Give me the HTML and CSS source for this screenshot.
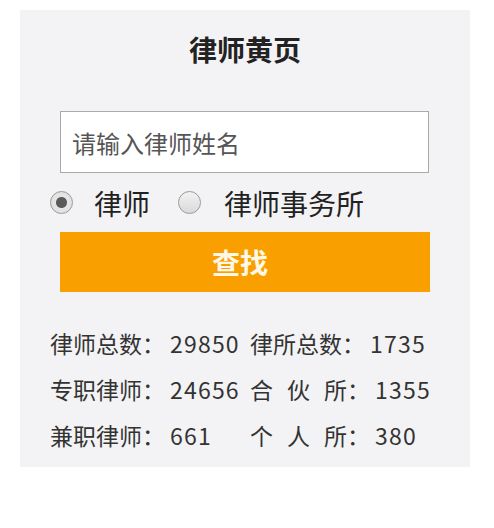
FILE: index.html
```html
<!DOCTYPE html>
<html lang="zh-CN">
<head>
<meta charset="utf-8">
<title>律师黄页</title>
<link rel="stylesheet" href="styles.css">
</head>
<body>
<div class="panel">
  <h1 class="title">律师黄页</h1>
  <input class="search" type="text" placeholder="请输入律师姓名">
  <div class="radios">
    <label class="opt"><input class="radio" type="radio" name="t" checked><span class="opt-text">律师</span></label>
    <label class="opt opt-2"><input class="radio" type="radio" name="t"><span class="opt-text">律师事务所</span></label>
  </div>
  <button class="btn" type="button">查找</button>
  <div class="stats">
    <div class="cell">律师总数：<span class="num">29850</span></div>
    <div class="cell">律所总数：<span class="num">1735</span></div>
    <div class="cell">专职律师：<span class="num">24656</span></div>
    <div class="cell"><span class="sp">合伙</span>所：<span class="num">1355</span></div>
    <div class="cell">兼职律师：<span class="num">661</span></div>
    <div class="cell"><span class="sp">个人</span>所：<span class="num">380</span></div>
  </div>
</div>
</body>
</html>
```

FILE: styles.css
```css
* { box-sizing: border-box; }
html, body { margin: 0; padding: 0; background: #ffffff; }
body {
  font-family: "Noto Sans CJK SC", "Noto Sans", sans-serif;
  color: #333;
}
.panel {
  margin: 10px 0 0 20px;
  width: 450px;
  height: 457px;
  background: #f3f3f5;
  padding: 19px 0 0 0;
  display: flex;
  flex-direction: column;
}
.title {
  margin: 0;
  font-size: 28px;
  line-height: 40px;
  font-weight: 700;
  text-align: center;
  color: #222;
}
.search {
  margin: 42px 0 0 40px;
  width: 369px;
  height: 62px;
  border: 1px solid #aaa;
  background: #fff;
  padding: 0 11px;
  font-family: inherit;
  font-size: 24px;
  color: #333;
  outline: none;
}
.search::placeholder { color: #555; }
.radios {
  height: 59px;
  display: flex;
  align-items: center;
  padding-left: 30px;
}
.opt {
  display: flex;
  align-items: center;
}
.opt-2 { margin-left: 28px; }
.radio {
  appearance: none;
  -webkit-appearance: none;
  margin: 0;
  width: 23px;
  height: 23px;
  border-radius: 50%;
  border: 1px solid #9a9a9a;
  background: linear-gradient(#f2f2f2, #d9d9d9);
}
.radio:checked {
  background: radial-gradient(circle, #5a5a5a 0 5px, #e6e6e6 6px, #dcdcdc 100%);
}
.opt-text {
  margin-left: 21px;
  font-size: 28px;
  color: #222;
}
.opt-2 .opt-text { margin-left: 23px; }
.btn {
  margin: 0 0 0 40px;
  width: 370px;
  height: 60px;
  border: none;
  background: #f9a000;
  color: #fff8e8;
  font-family: inherit;
  font-size: 28px;
  font-weight: 700;
  padding: 0 10px 0 0;
}
.stats {
  margin-top: 28px;
  padding-left: 30px;
  display: grid;
  grid-template-columns: 200px auto;
  font-size: 23px;
  line-height: 46px;
  color: #333;
}
.cell { white-space: nowrap; }
.num { margin-left: 5px; letter-spacing: 1.2px; }
.sp { letter-spacing: 14px; }
```
